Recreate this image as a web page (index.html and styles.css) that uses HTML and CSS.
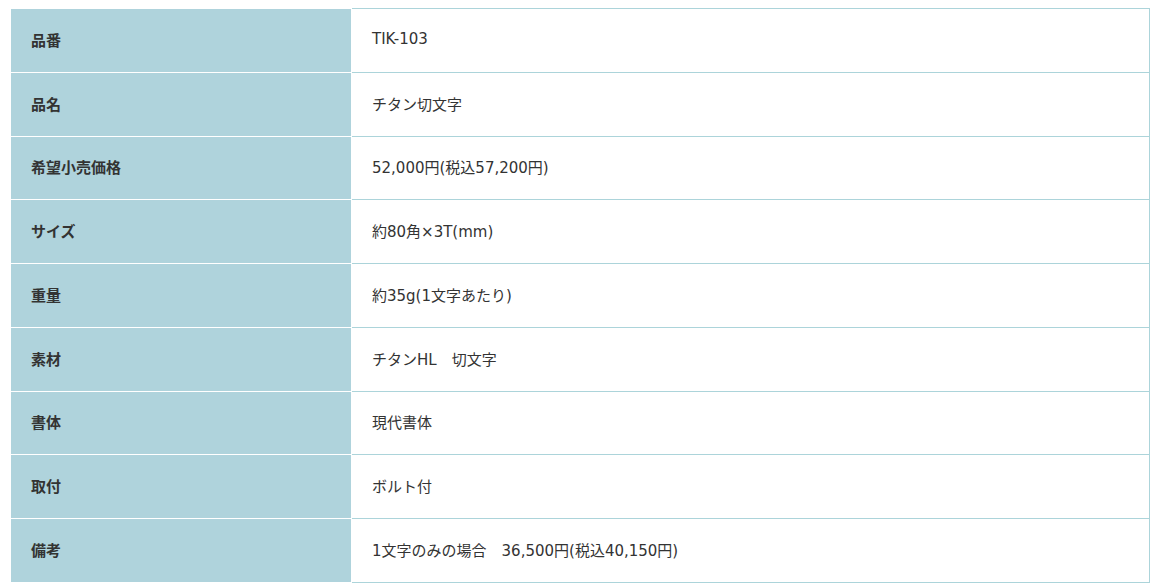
FILE: index.html
```html
<!DOCTYPE html>
<html lang="ja">
<head>
<meta charset="utf-8">
<title>仕様</title>
<link rel="stylesheet" href="styles.css">
</head>
<body>
<div class="wrap">
<table class="spec">
<tbody>
<tr><th>品番</th><td>TIK-103</td></tr>
<tr><th>品名</th><td>チタン切文字</td></tr>
<tr><th>希望小売価格</th><td>52,000円(税込57,200円)</td></tr>
<tr><th>サイズ</th><td>約80角×3T(mm)</td></tr>
<tr><th>重量</th><td>約35g(1文字あたり)</td></tr>
<tr><th>素材</th><td>チタンHL　切文字</td></tr>
<tr><th>書体</th><td>現代書体</td></tr>
<tr><th>取付</th><td>ボルト付</td></tr>
<tr><th>備考</th><td>1文字のみの場合　36,500円(税込40,150円)</td></tr>
</tbody>
</table>
</div>
</body>
</html>
```
FILE: styles.css
```css
html, body {
  margin: 0;
  padding: 0;
  background: #fff;
}
.wrap {
  padding: 8px 7px 0 10px;
}
.spec {
  width: 100%;
  border-collapse: collapse;
  table-layout: fixed;
  font-family: "DejaVu Sans", "Noto Sans CJK JP", sans-serif;
  font-size: 15px;
  color: #333;
}
.spec th,
.spec td {
  height: 63.75px;
  padding: 0 20px 2px;
  vertical-align: middle;
  text-align: left;
  box-sizing: border-box;
}
.spec th {
  width: 341px;
  background: #afd3dc;
  font-weight: bold;
  font-family: "Noto Sans CJK JP", sans-serif;
  border: 1px solid #fff;
}
.spec td {
  border: 1px solid #acd4da;
  font-weight: normal;
}
```
